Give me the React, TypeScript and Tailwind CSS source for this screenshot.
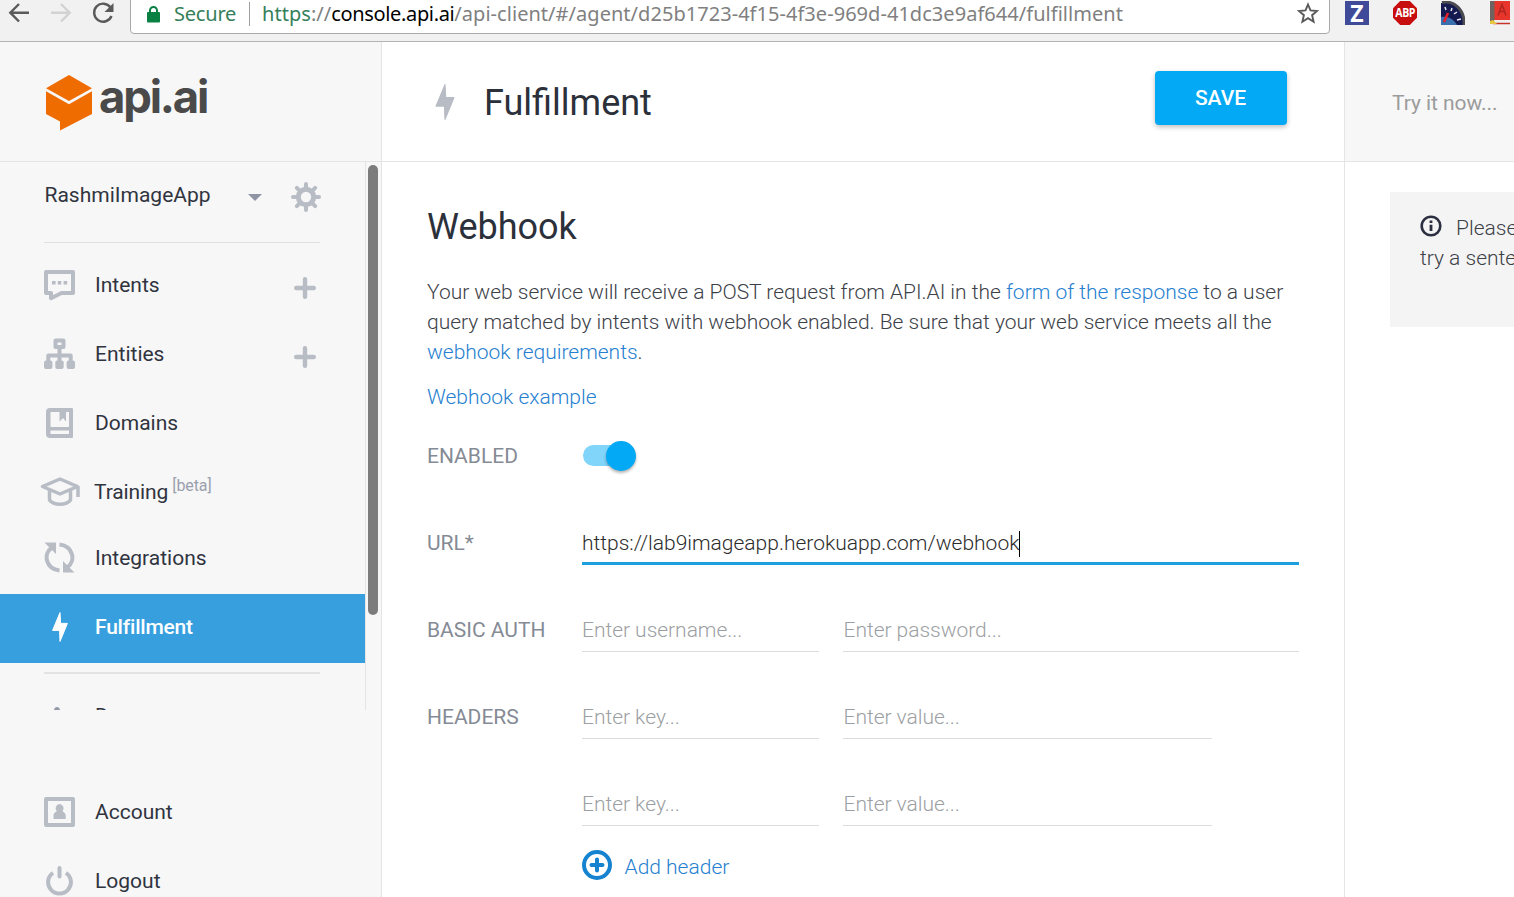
import type { ReactNode } from "react";

function Bolt({ className }: { className: string }) {
  return (
    <svg viewBox="0 0 16 30" className={className} fill="currentColor" stroke="currentColor" strokeWidth="1" strokeLinejoin="round">
      <path d="M8 .6 .6 18.4h7L8 29.4 15.4 11.4H8.6z" />
    </svg>
  );
}

function IntentsIcon() {
  return (
    <svg viewBox="0 0 31 31" className="h-[31px] w-[31px]" fill="none" stroke="currentColor" strokeLinejoin="round">
      <path d="M2 2h27v21H17.5L7 28.2V23H2z" strokeWidth="4" />
      <path d="M8 11h3.6v3.6H8zM13.7 11h3.6v3.6h-3.6zM19.6 11h3.6v3.6h-3.6z" fill="currentColor" stroke="none" />
    </svg>
  );
}

function EntitiesIcon() {
  return (
    <svg viewBox="0 0 31 31" className="-mt-[2px] h-[31px] w-[31px]" fill="none" stroke="currentColor" strokeWidth="4" strokeLinejoin="round">
      <path d="M11.5 2.5h8v6.5h-8z" />
      <path d="M15.500 9v14M4.300 23v-5.600h22.400V23" />
      <g fill="currentColor" stroke="none">
        <rect x="0" y="22.500" width="8.400" height="8.500" rx="2" />
        <rect x="11.300" y="22.500" width="8.400" height="8.500" rx="2" />
        <rect x="22.600" y="22.500" width="8.400" height="8.500" rx="2" />
      </g>
    </svg>
  );
}

function DomainsIcon() {
  return (
    <svg viewBox="0 0 27 30" className="-mt-[2px] h-[30px] w-[27px]" fill="currentColor">
      <path fillRule="evenodd" d="M4 0h22a1 1 0 0 1 1 1v28a1 1 0 0 1-1 1H4a4 4 0 0 1-4-4V4a4 4 0 0 1 4-4zM4.500 4v15H23V4h-3v9.500l-3-3.500-3.500 3.500V4zM4.500 22.500v3.500H23v-3.500z" />
    </svg>
  );
}

function TrainingIcon() {
  return (
    <svg viewBox="0 0 40 29" className="h-[29px] w-[40px] shrink-0" fill="none" stroke="currentColor" strokeWidth="3.500" strokeLinejoin="round">
      <path d="M2.500 9.500 20 2l17.500 7.500L20 17z" />
      <path d="M9.500 13v10c4 5.600 17 5.600 21 0V13M38 9v11" />
    </svg>
  );
}

function IntegrationsIcon() {
  return (
    <svg viewBox="0 0 31 31" className="-mt-[2px] h-[31px] w-[31px]" fill="none" stroke="currentColor" strokeWidth="4">
      <path d="M15.500 28.500C2 27 -1.500 12 8 5.500" />
      <path d="M15.500 2.500C29 4 32.500 19 23 25.500" />
      <path d="M.5 .5H12V12zM30.500 30.500H19V19z" fill="currentColor" stroke="none" />
    </svg>
  );
}

function AccountIcon() {
  return (
    <svg viewBox="0 0 31 30" className="-mt-[2px] h-[30px] w-[31px]" fill="none" stroke="currentColor" strokeWidth="4" strokeLinejoin="round">
      <path d="M2 2h27v26H2z" />
      <path stroke="none" fill="currentColor" d="M15.500 7a4.200 4.200 0 0 1 3 7c1 1.500 3.200 1.500 3.200 5v3H9.500v-3c0-3.500 2.200-3.500 3.200-5a4.200 4.200 0 0 1 2.800-7z" />
    </svg>
  );
}

function LogoutIcon() {
  return (
    <svg viewBox="0 0 27 30" className="-mt-[2px] h-[30px] w-[27px]" fill="none" stroke="currentColor" strokeWidth="4">
      <path d="M7 6.800A11.400 11.400 0 1 0 20 6.800" />
      <path d="M13.500 2V10.500" strokeLinecap="round" />
    </svg>
  );
}

function Gear() {
  return (
    <svg viewBox="0 0 30 30" className="h-[30px] w-[30px]" fill="none" stroke="currentColor">
      <circle cx="15" cy="15" r="7.700" strokeWidth="5" />
      <path d="M15 2v4M15 24v4M2 15h4M24 15h4M5.800 5.800l2.800 2.800M21.400 21.400l2.800 2.800M5.800 24.200l2.800-2.800M21.400 8.600l2.800-2.800" strokeWidth="4" strokeLinecap="round" />
    </svg>
  );
}

function Plus() {
  return (
    <svg viewBox="0 0 22 22" className="mt-[5px] h-[22px] w-[22px]" stroke="currentColor" strokeWidth="4.400" strokeLinecap="round">
      <path d="M2.200 11h17.600M11 2.200v17.600" />
    </svg>
  );
}

function NavItem({ icon, children, plus, className }: { icon: ReactNode; children: ReactNode; plus?: boolean; className: string }) {
  return (
    <div className={"flex shrink-0 items-center text-[#b8bcc4] " + className}>
      <div className="ml-[40px] flex w-[39px] justify-center">{icon}</div>
      <div className="ml-[16px] w-[199px] whitespace-nowrap text-[21px] text-[#30343f]">{children}</div>
      {plus && <Plus />}
    </div>
  );
}

function Toolbar() {
  return (
    <header className="flex h-[42px] shrink-0 overflow-hidden whitespace-nowrap border-b border-[#b4b4b4] bg-[#f1f1f1] font-['Noto_Sans','Open_Sans',sans-serif]">
      <svg viewBox="0 0 130 41" className="h-[41px] w-[130px] shrink-0" fill="none" strokeWidth="2.400">
        <path d="M29 12.700H11M19 4l-8.700 8.700L19 21.500" stroke="#5a5a5a" />
        <path d="M51 12.700h18M61 4l8.700 8.700L61 21.500" stroke="#d2d2d2" />
        <path d="M110.500 7.500A9 9 0 1 0 111.500 16" stroke="#5a5a5a" />
        <path d="M113.500 3v9h-9z" fill="#5a5a5a" />
      </svg>
      <div className="-mt-2 flex h-[42px] w-[1200px] shrink-0 items-center rounded-[4px] border border-[#a9a9a9] bg-white pt-[2px]">
        <svg viewBox="0 0 13 17" className="ml-[16px] h-[17px] w-[13px]">
          <rect y="6" width="13" height="10.500" rx="1" fill="#0b8043" />
          <path d="M3 7V4.500a3.500 3.500 0 0 1 7 0V7" fill="none" stroke="#0b8043" strokeWidth="2" />
        </svg>
        <div className="ml-[14px] w-[62px] text-[20px] tracking-[-0.2px] text-[#35805a]">Secure</div>
        <div className="ml-[13px] h-[24px] w-px bg-[#a0a0a0]" />
        <div className="ml-[12px] w-[1035px] text-[20px] tracking-[0.04px] text-[#808080]">
          <span className="text-[#35805a]">https</span>://<span className="tracking-[-0.35px] text-black">console.api.ai</span>/api-client/#/agent/d25b1723-4f15-4f3e-969d-41dc3e9af644/fulfillment
        </div>
        <svg viewBox="0 0 22 22" className="-mt-[2px] h-[22px] w-[22px]" fill="none" stroke="#5a5a5a" strokeWidth="1.900">
          <path d="M11 2.500 13.500 8.400 20 9 15.100 13.200 16.600 19.700 11 16.200 5.400 19.700 6.900 13.200 2 9 8.500 8.400z" />
        </svg>
      </div>
      <div className="ml-[15px] mt-px flex h-[24px] shrink-0 gap-[24px]">
        <div className="flex h-[24px] w-[24px] items-center justify-center bg-[#3f4b98] font-['Open_Sans'] text-[23px] font-bold leading-none text-white">Z</div>
        <div className="grid h-[24px] w-[24px] place-items-center">
          <div className="col-start-1 row-start-1 h-[24px] w-[24px] bg-[#c70d0d] [clip-path:polygon(30%_0,70%_0,100%_30%,100%_70%,70%_100%,30%_100%,0_70%,0_30%)]" />
          <div className="col-start-1 row-start-1 scale-x-[0.88] font-['Open_Sans'] text-[12px] font-bold leading-[24px] tracking-[-0.5px] text-white">ABP</div>
        </div>
        <svg viewBox="0 0 24 24" className="h-[24px] w-[24px]">
          <path d="M0 2C12-2 24 6 24 24H0z" fill="#14194f" />
          <path d="M1 1.500C13-1 24 9 23 24" fill="none" stroke="#4b4b50" strokeWidth="3" />
          <path d="M0 16c6-1 12 1 16 8H0z" fill="#3a6fb0" />
          <path d="M4 6l1 3M11 7l-1 3M16 11l-3 2M20 18l-4 1" stroke="#e4e4f0" strokeWidth="1.500" />
          <path d="M7 12 3 21" stroke="#e3202a" strokeWidth="2.500" />
        </svg>
        <svg viewBox="0 0 24 24" className="h-[24px] w-[24px]">
          <path d="M1 0h5v23H1z" fill="#70625f" />
          <path d="M5.500 0H21v19H5.500z" fill="#e8352b" />
          <path d="M5 19h16v4H5z" fill="#eee" />
          <path d="M4 22.500h17" stroke="#c8342c" strokeWidth="1.500" />
          <path d="m1 20 3-1 4 4H1z" fill="#e7c640" />
          <path d="m9 14.500 4-11 4 11M10.500 10.500h5" fill="none" stroke="#b02620" strokeWidth="1.600" />
        </svg>
      </div>
    </header>
  );
}

function Sidebar() {
  return (
    <aside className="flex w-[382px] shrink-0 flex-col border-r border-[#e3e4e6] bg-[#f7f7f7]">
      <div className="flex h-[120px] shrink-0 items-start border-b border-[#e3e4e6]">
        <svg viewBox="0 0 46 56" className="ml-[46px] mt-[33px] h-[56px] w-[46px]" fill="#ef6c00">
          <path d="M23 0 46 13.200 23 26 0 13.200z" />
          <path d="M0 16.200 23 29.200 46 16.200V39L14 55.500V46.500L0 39z" />
        </svg>
        <div className="ml-[7px] mt-[25px] font-['Inter'] text-[45.500px] font-bold leading-[60px] tracking-[-2.2px] text-[#4a4a4a]">api.ai</div>
      </div>
      <div className="flex h-[548px] shrink-0">
        <div className="flex h-[548px] w-[366px] shrink-0 flex-col overflow-hidden border-r border-[#e3e4e6]">
          <div className="flex h-[80px] shrink-0 items-center pb-[12px]">
            <div className="ml-[44.500px] w-[203.500px] text-[21px] text-[#30343f]">RashmiImageApp</div>
            <div className="mt-[2px] h-0 w-0 border-x-[7px] border-t-[7px] border-x-transparent border-t-[#8f95a5]" />
            <div className="ml-[29.400px] mt-[2px] text-[#b8bcc4]"><Gear /></div>
          </div>
          <div className="ml-[44px] mb-[8px] h-px w-[276px] shrink-0 bg-[#dfe1e4]" />
          <NavItem className="h-[69px]" icon={<IntentsIcon />} plus>Intents</NavItem>
          <NavItem className="h-[69px]" icon={<EntitiesIcon />} plus>Entities</NavItem>
          <NavItem className="h-[69px]" icon={<DomainsIcon />}>Domains</NavItem>
          <NavItem className="h-[67px]" icon={<TrainingIcon />}>
            <div className="-ml-px flex items-baseline pt-[3px]">
              <span className="tracking-[-0.1px]">Training</span>
              <span className="ml-[4px] -translate-y-[8px] text-[16px] leading-none tracking-[-0.1px] text-[#9aa0ad]">[beta]</span>
            </div>
          </NavItem>
          <NavItem className="h-[69px] pb-[2px]" icon={<IntegrationsIcon />}>Integrations</NavItem>
          <NavItem className="h-[69px] bg-[#389fdf] pb-[2px]" icon={<Bolt className="-mt-[2px] h-[30px] w-[16px] text-white" />}>
            <span className="font-medium tracking-[-0.2px] text-white">Fulfillment</span>
          </NavItem>
          <div className="ml-[44px] mt-[9px] h-[2px] w-[276px] shrink-0 bg-[#e2e3e5]" />
          <NavItem className="h-[86px]" icon={
            <svg viewBox="0 0 20 20" className="-ml-[6px] h-[20px] w-[20px]" fill="#9399a6"><path d="M10 0c2 0 3 2 3 3v17H7V3c0-1 1-3 3-3z" /></svg>
          }>Docs</NavItem>
        </div>
        <div className="ml-[2px] mt-[3px] h-[450px] w-[10px] rounded-full bg-[#7c7c7c]" />
      </div>
      <div className="mt-[68px]">
        <NavItem className="h-[69px]" icon={<AccountIcon />}>Account</NavItem>
        <NavItem className="h-[69px]" icon={<LogoutIcon />}>Logout</NavItem>
      </div>
    </aside>
  );
}

function Field({ className, children }: { className: string; children: string }) {
  return (
    <div className={"h-[44px] border-b border-[#dcdcdc] text-[21px] font-light leading-[44px] tracking-[-0.03px] text-[#9c9fa3] " + className}>
      {children}
    </div>
  );
}

function Main() {
  return (
    <main className="flex w-[963px] shrink-0 flex-col border-r border-[#e3e4e6] bg-white">
      <div className="flex h-[120px] shrink-0 items-center border-b border-[#e3e4e6]">
        <Bolt className="ml-[53px] h-[36px] w-[20px] text-[#b8bcc4]" />
        <div className="ml-[29px] w-[671px] pt-[3px] text-[36px] text-[#2b303b]">Fulfillment</div>
        <div className="-mt-[8px] flex h-[54px] w-[132px] items-center justify-center rounded-[4px] bg-[#03a9f4] pr-px pt-[2px] text-[21px] font-medium text-white shadow-[0_2px_5px_rgba(0,0,0,0.26)]">SAVE</div>
      </div>
      <div className="flex flex-col pl-[45px]">
        <h1 className="mt-[38px] h-[54px] text-[36px] leading-[54px] text-[#2b303b]">Webhook</h1>
        <div className="mt-[23px] whitespace-nowrap text-[21px] font-light leading-[30px] tracking-[-0.01px] text-[#3c4148]">
          <p>Your web service will receive a POST request from API.AI in the <span className="text-[#2680cf]">form of the response</span> to a user</p>
          <p>query matched by intents with webhook enabled. Be sure that your web service meets all the</p>
          <p><span className="text-[#2680cf]">webhook requirements</span>.</p>
          <p className="mt-[15px] text-[#2680cf]">Webhook example</p>
        </div>
        <div className="mt-[22px] grid grid-cols-[155px_1fr] gap-y-[43px] text-[21px] text-[#858b95]">
          <div className="h-[44px] leading-[44px]">ENABLED</div>
          <div className="flex h-[44px] items-center">
            <div className="-mt-px ml-px flex h-[21px] w-[52px] items-center rounded-full bg-[#81d4fa]">
              <div className="ml-[23px] mt-px h-[30px] w-[30px] shrink-0 rounded-full bg-[#03a9f4] shadow-[0_2px_3px_rgba(0,0,0,0.3)]" />
            </div>
          </div>
          <div className="h-[44px] leading-[44px]">URL*</div>
          <div className="flex h-[44px] w-[717px] items-center border-b-[3px] border-[#1e9fdd] pt-[4px] font-light text-[#2c2c2c]">
            <div className="tracking-[-0.01px]">https://lab9imageapp.herokuapp.com/webhook</div>
            <div className="h-[26px] w-px bg-black" />
          </div>
          <div className="h-[44px] leading-[44px]">BASIC AUTH</div>
          <div className="flex gap-[24px]">
            <Field className="w-[237px]">Enter username...</Field>
            <Field className="w-[456px] indent-[0.5px]">Enter password...</Field>
          </div>
          <div className="h-[44px] leading-[44px]">HEADERS</div>
          <div className="flex gap-[24px]">
            <Field className="w-[237px]">Enter key...</Field>
            <Field className="w-[369px] indent-[0.5px]">Enter value...</Field>
          </div>
          <div />
          <div className="flex gap-[24px]">
            <Field className="w-[237px]">Enter key...</Field>
            <Field className="w-[369px] indent-[0.5px]">Enter value...</Field>
          </div>
        </div>
        <div className="ml-[155px] mt-[24px] flex h-[30px] items-center text-[21px] font-light text-[#2680cf]">
          <svg viewBox="0 0 30 30" className="h-[30px] w-[30px]" fill="none" stroke="#1583cf">
            <circle cx="15" cy="15" r="13" strokeWidth="4" />
            <path d="M15 9.500v11M9.500 15h11" strokeWidth="4" strokeLinecap="round" />
          </svg>
          <div className="ml-[12.500px] pt-[5px]">Add header</div>
        </div>
      </div>
    </main>
  );
}

function TestConsole() {
  return (
    <aside className="min-w-0 flex-1 overflow-hidden whitespace-nowrap">
      <div className="flex h-[120px] items-center border-b border-[#e3e4e6] bg-[#f7f7f7] pl-[47px] pt-[5px] text-[21px] tracking-[-0.05px] text-[#9b9b9b]">Try it now...</div>
      <div className="ml-[45px] mt-[30px] h-[135px] w-[300px] bg-[#f4f4f4] pl-[30px] pt-[21px] text-[21px] font-light leading-[30px] text-[#3c4148]">
        <div className="flex items-center">
          <svg viewBox="0 0 22 22" className="-mt-[4px] h-[22px] w-[22px]" fill="none" stroke="#2b2f40">
            <circle cx="11" cy="11" r="9.300" strokeWidth="2.600" />
            <path d="M11 9.800v6.200M11 5.600v2.500" strokeWidth="2.800" />
          </svg>
          <div className="ml-[14px]">Please</div>
        </div>
        <div>try a sente</div>
      </div>
    </aside>
  );
}

export default function App() {
  return (
    <div className="flex h-[897px] w-[1514px] flex-col overflow-hidden bg-white font-['Roboto',sans-serif]">
      <Toolbar />
      <div className="flex min-h-0 flex-1">
        <Sidebar />
        <Main />
        <TestConsole />
      </div>
    </div>
  );
}
